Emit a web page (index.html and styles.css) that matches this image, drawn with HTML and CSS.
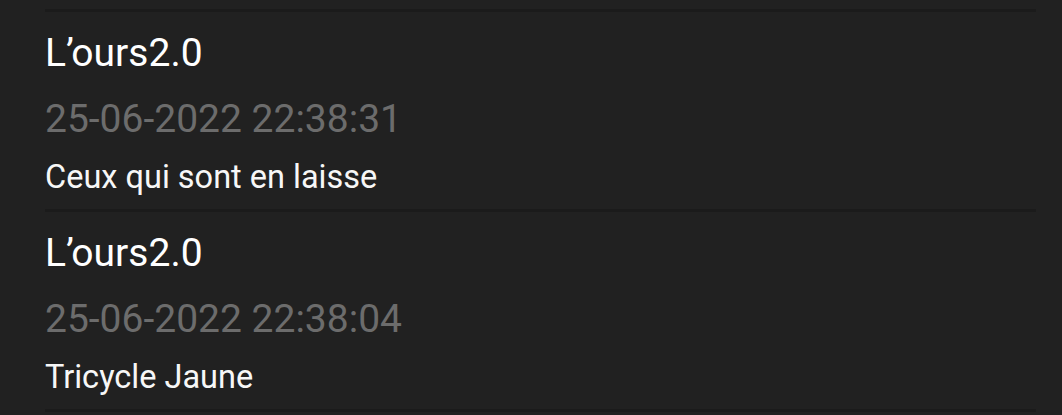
FILE: index.html
```html
<!DOCTYPE html>
<html lang="fr">
<head>
  <meta charset="UTF-8">
  <meta name="viewport" content="width=device-width, initial-scale=1.0">
  <title>Commentaires</title>
  <link rel="stylesheet" href="styles.css">
</head>
<body>
  <div class="comment-list">
    <div class="comment">
      <div class="author">L’ours2.0</div>
      <div class="date">25-06-2022 22:38:31</div>
      <div class="text">Ceux qui sont en laisse</div>
    </div>
    <div class="comment">
      <div class="author">L’ours2.0</div>
      <div class="date">25-06-2022 22:38:04</div>
      <div class="text">Tricycle Jaune</div>
    </div>
  </div>
</body>
</html>
```
FILE: styles.css
```css
body {
  font-family: Roboto, 'Noto Sans', sans-serif;
  background: #212121;
  margin: 0;
  padding: 9px 26px 0 45px;
  color: #fff;
}
.comment-list {
  border-bottom: 3px solid #1b1b1b;
}
.comment {
  display: flex;
  flex-direction: column;
  gap: 10px;
  padding: 13px 0 12px;
  border-top: 3px solid #1b1b1b;
}
.author {
  font-size: 39px;
  line-height: 56px;
  color: #fff;
}
.date {
  font-size: 39px;
  line-height: 56px;
  color: #6c6c6c;
}
.text {
  font-size: 32.5px;
  line-height: 40px;
  color: #f7f7f7;
}
```
